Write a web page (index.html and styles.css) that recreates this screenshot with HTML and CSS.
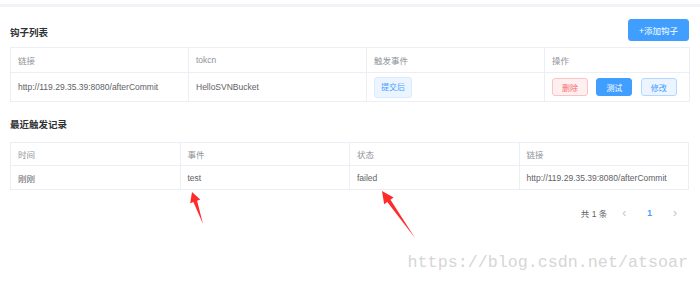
FILE: index.html
```html
<!DOCTYPE html>
<html lang="zh-CN">
<head>
    <meta charset="UTF-8">
    <meta name="viewport" content="width=device-width, initial-scale=1.0">
    <title>钩子</title>
    <link rel="stylesheet" href="styles.css">
</head>
<body>
    <div class="topbar"></div>
    <div class="page">
        <div class="head-row">
            <h3 class="title">钩子列表</h3>
            <button class="btn btn-primary btn-add">+添加钩子</button>
        </div>
        <table class="grid hooks">
            <colgroup>
                <col class="c-url"><col class="c-token"><col class="c-event"><col class="c-ops">
            </colgroup>
            <tr>
                <th>链接</th>
                <th>tokcn</th>
                <th>触发事件</th>
                <th>操作</th>
            </tr>
            <tr>
                <td>http://119.29.35.39:8080/afterCommit</td>
                <td>HelloSVNBucket</td>
                <td><span class="tag">提交后</span></td>
                <td class="ops">
                    <button class="btn btn-small btn-danger">删除</button>
                    <button class="btn btn-small btn-primary">测试</button>
                    <button class="btn btn-small btn-plain">修改</button>
                </td>
            </tr>
        </table>

        <h3 class="title title-log">最近触发记录</h3>
        <table class="grid logs">
            <tr>
                <th>时间</th>
                <th>事件</th>
                <th>状态</th>
                <th>链接</th>
            </tr>
            <tr>
                <td>刚刚</td>
                <td>test</td>
                <td>failed</td>
                <td>http://119.29.35.39:8080/afterCommit</td>
            </tr>
        </table>

        <div class="pager">
            <span class="total">共 1 条</span>
            <span class="arrow">&lsaquo;</span>
            <span class="num">1</span>
            <span class="arrow">&rsaquo;</span>
        </div>

        <div class="watermark">https://blog.csdn.net/atsoar</div>
    </div>

    <svg class="marks" width="700" height="282" viewBox="0 0 700 282">
        <polygon points="192,192 200.2,199.6 197.1,200.8 203,224 193.4,202.1 190.2,203.2" fill="#ff2a2a"/>
        <polygon points="382,191 393.6,197.5 390.5,199.7 415,238 387.3,202 384.2,204.2" fill="#ff2a2a"/>
    </svg>
</body>
</html>
```

FILE: styles.css
```css
body {
    margin: 0;
    font-family: "Liberation Sans", "Noto Sans CJK SC", sans-serif;
    color: #606266;
    background: #fff;
    position: relative;
    width: 700px;
    height: 282px;
    overflow: hidden;
}

.topbar {
    margin-top: 4px;
    height: 3px;
    background: #f0f2f5;
}

.page {
    padding: 0 11px 0 10px;
}

.head-row {
    display: flex;
    justify-content: space-between;
    align-items: center;
    margin-top: 12px;
    height: 22px;
}

.title {
    margin: 0;
    font-size: 9.5px;
    font-weight: bold;
    color: #303133;
}

.head-row .title {
    padding-top: 4px;
}

.title-log {
    margin: 15px 0 0;
    height: 15px;
    line-height: 15px;
}

.btn {
    font-family: inherit;
    border: 1px solid transparent;
    border-radius: 3px;
    cursor: pointer;
    padding: 0;
}

.btn-add {
    width: 61px;
    height: 22px;
    font-size: 8.5px;
}

.btn-primary {
    background: #409eff;
    border-color: #409eff;
    color: #fff;
}

.btn-small {
    width: 36px;
    height: 18px;
    font-size: 8px;
}

.btn-danger {
    background: #fef0f0;
    border-color: #fbc4c4;
    color: #f56c6c;
}

.btn-plain {
    background: #ecf5ff;
    border-color: #b3d8ff;
    color: #409eff;
}

.grid {
    width: 679px;
    border-collapse: collapse;
    table-layout: fixed;
    font-size: 8.5px;
}

.grid th,
.grid td {
    border: 1px solid #ebeef5;
    text-align: left;
    padding: 0 0 0 7px;
    white-space: nowrap;
}

.grid th {
    font-weight: normal;
    color: #909399;
}

.hooks {
    margin-top: 6px;
}

.hooks th {
    height: 24px;
}

.hooks td {
    height: 28px;
}

.c-url,
.c-token,
.c-event {
    width: 178px;
}

.c-ops {
    width: 145px;
}

.tag {
    display: inline-block;
    height: 19px;
    line-height: 19px;
    padding: 0 6px;
    border: 1px solid #d9ecff;
    border-radius: 3px;
    background: #ecf5ff;
    color: #409eff;
    font-size: 8px;
}

.ops .btn {
    margin-right: 6px;
}

.logs {
    margin-top: 10px;
}

.logs th {
    height: 22px;
}

.logs td {
    height: 23px;
}

.pager {
    display: flex;
    justify-content: flex-end;
    align-items: center;
    margin-top: 16px;
    padding-right: 12px;
    height: 14px;
    font-size: 8.5px;
}

.pager .total {
    margin-right: 15px;
}

.pager .arrow {
    color: #c0c4cc;
    font-size: 12px;
}

.pager .num {
    color: #409eff;
    font-weight: bold;
    margin: 0 21px;
}

.watermark {
    margin-top: 33px;
    text-align: right;
    padding-right: 1px;
    font-family: "Liberation Mono", monospace;
    font-size: 16.7px;
    color: #d6d6d6;
}

.marks {
    position: absolute;
    left: 0;
    top: 0;
    pointer-events: none;
}
```
